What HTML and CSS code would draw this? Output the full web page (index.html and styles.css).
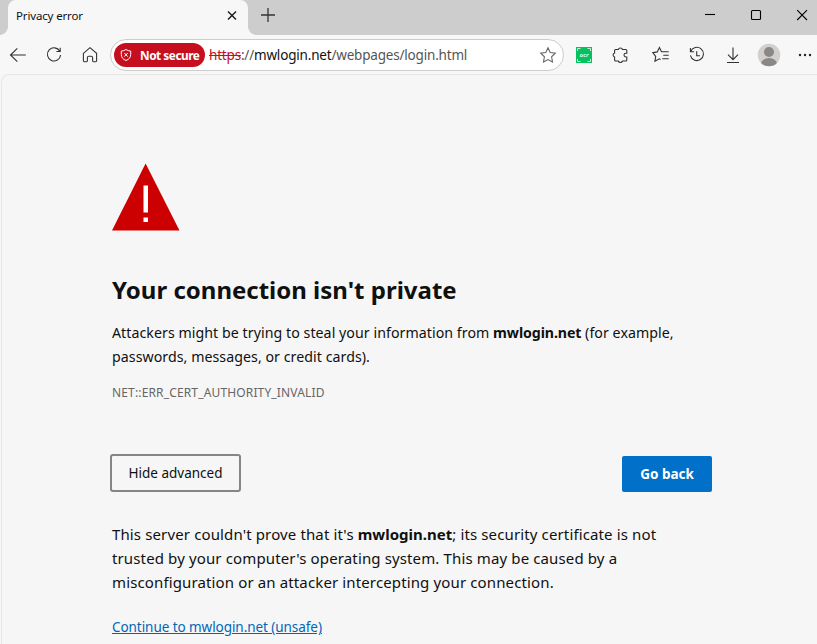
FILE: index.html
```html
<!DOCTYPE html>
<html lang="en">
<head>
    <title>Privacy error</title>
    <meta charset="UTF-8">
    <meta name="viewport" content="width=device-width, initial-scale=1.0">
    <link rel="stylesheet" href="styles.css">
</head>
<body>
  <div class="tab-bar">
    <div class="tab">
      <span class="tab-title">Privacy error</span>
      <svg class="tab-close" width="10" height="10" viewBox="0 0 10 10"><path d="M1 .5L9 8.500M9 .5L1 8.500"/></svg>
    </div>
    <svg class="new-tab" width="16" height="16" viewBox="0 0 16 16"><path d="M8 1v14M1 8h14"/></svg>
    <div class="window-buttons">
      <svg width="46" height="30" viewBox="0 0 46 30"><path d="M18 14.5h10"/></svg>
      <svg width="46" height="30" viewBox="0 0 46 30"><rect x="18.5" y="10.5" width="9" height="9" rx="1"/></svg>
      <svg width="46" height="30" viewBox="0 0 46 30"><path d="M18.2 10.2l9.8 9.8M28 10.2l-9.8 9.8"/></svg>
    </div>
  </div>

  <div class="toolbar">
    <div class="tool">
      <svg width="20" height="20" viewBox="0 0 20 20"><path d="M17.8 10H2.6M9.3 3.3L2.5 10l6.8 6.7"/></svg>
    </div>
    <div class="tool">
      <svg width="20" height="20" viewBox="0 0 20 20"><path d="M15.8 6.2A6.6 6.6 0 1 0 16.6 10M16.2 2.8v3.7h-3.8"/></svg>
    </div>
    <div class="tool">
      <svg width="20" height="20" viewBox="0 0 20 20"><path d="M3.4 8.3L10 2.7l6.6 5.6v7.5q0 .9-.9.9h-2.2q-.9 0-.9-.9v-3.2q0-1.4-1.4-1.4H8.8q-1.4 0-1.4 1.4v3.2q0 .9-.9.9H4.3q-.9 0-.9-.9z"/></svg>
    </div>
    <div class="address">
      <div class="not-secure">
        <svg width="12" height="14" viewBox="0 0 12 14"><path d="M6 1.500Q8.200 3 10.700 3.100V6.500Q10.700 10.700 6 12.500Q1.300 10.700 1.300 6.500V3.100Q3.800 3 6 1.500zM4.300 5l3.400 3.600M7.700 5l-3.400 3.600"/></svg>
        <span>Not secure</span>
      </div>
      <div class="url"><span class="scheme">https</span>://<span class="host">mwlogin.net</span>/webpages/login.html</div>
      <svg class="star" width="18" height="18" viewBox="0 0 18 18"><path d="M9 1.8l2.2 4.7 5.1.7-3.7 3.6.9 5.1L9 13.5l-4.5 2.4.9-5.1L1.700 7.200l5.100-.7z"/></svg>
    </div>
    <div class="tool">
      <svg class="ocr" width="16" height="16" viewBox="0 0 16 16">
        <rect width="16" height="16"/>
        <path d="M1.500 4V1.500H4.500M11.500 1.500H14.500V4M1.500 12V14.500H4.500M11.500 14.500H14.500V12"/>
        <text x="8" y="10">ocr</text>
      </svg>
    </div>
    <div class="tool">
      <svg width="20" height="20" viewBox="0 0 20 20"><path d="M5.600 4.500h2.700a2.200 2.200 0 0 1 4.200 0h3.300q1 0 1 1v2.700h-.9a1.900 1.900 0 0 0 0 3.800h.9v3q0 1-1 1h-3.300a2.200 2.200 0 0 1-4.200 0H5.600q-1 0-1-1v-2.900a2.100 2.100 0 0 1 0-4V5.500q0-1 1-1z"/></svg>
    </div>
    <div class="divider"></div>
    <div class="tool">
      <svg width="20" height="20" viewBox="0 0 20 20"><path d="M9.600 14.500l-1.300-.7-4.400 2.500.8-5L1.800 7.700l4.500-.8L8.400 2.600l2.100 4.200h7.200M12.300 10.200h5.400M11.300 13.700h6.400"/></svg>
    </div>
    <div class="tool">
      <svg width="20" height="20" viewBox="0 0 20 20"><path d="M3.400 3.100v3.600h3.700M3.700 6.500A6.600 6.600 0 1 1 3.400 10.400M9.700 6.200v4.500h3.300"/></svg>
    </div>
    <div class="tool">
      <svg width="20" height="20" viewBox="0 0 20 20"><path d="M10 2.500v12M5 9.600l5 5 5-5M4 17.500h12"/></svg>
    </div>
    <div class="tool">
      <svg class="avatar" width="24" height="24" viewBox="0 0 24 24">
        <clipPath id="face"><circle cx="12" cy="12" r="11.300"/></clipPath>
        <circle class="disc" cx="12" cy="12" r="11.300"/>
        <circle cx="12" cy="9" r="5"/>
        <ellipse cx="12" cy="21" rx="8" ry="6" clip-path="url(#face)"/>
      </svg>
    </div>
    <div class="tool">
      <svg class="dots" width="20" height="20" viewBox="0 0 20 20"><circle cx="5" cy="10" r="1.200"/><circle cx="10" cy="10" r="1.200"/><circle cx="15" cy="10" r="1.200"/></svg>
    </div>
  </div>

  <div class="page">
    <div class="content">
      <svg class="warning" width="68" height="68" viewBox="0 0 68 68">
        <path class="triangle" d="M33.600 .5L67.500 67.500H0z"/>
        <path class="mark" d="M31.500 22.500h4.500v27h-4.500zM31.500 54.500h4.500v4.500h-4.500z"/>
      </svg>
      <h1>Your connection isn't private</h1>
      <p class="message">Attackers might be trying to steal your information from <b>mwlogin.net</b> (for example,<br>passwords, messages, or credit cards).</p>
      <div class="error-code">NET::ERR_CERT_AUTHORITY_INVALID</div>
      <div class="buttons">
        <button class="advanced">Hide advanced</button>
        <button class="primary">Go back</button>
      </div>
      <p class="details">This server couldn't prove that it's <b>mwlogin.net</b>; its security certificate is not<br>trusted by your computer's operating system. This may be caused by a<br>misconfiguration or an attacker intercepting your connection.</p>
      <a class="proceed" href="#">Continue to mwlogin.net (unsafe)</a>
    </div>
  </div>
</body>
</html>
```
FILE: styles.css
```css
* {
    box-sizing: border-box;
}

body {
    margin: 0;
    height: 644px;
    overflow: hidden;
    display: flex;
    flex-direction: column;
    background-color: #f7f7f7;
    color: #101010;
    font-family: "Noto Sans", "Open Sans", sans-serif;
    white-space: nowrap;
}

svg {
    display: block;
    flex: none;
    fill: none;
    stroke: #333;
    stroke-width: 1.1;
}

/* Tabs */
.tab-bar {
    height: 35px;
    flex: none;
    display: flex;
    background-color: #cdcdcd;
}

.tab {
    position: relative;
    width: 240px;
    margin-left: 8px;
    padding: 0 11px 4px 8px;
    display: flex;
    align-items: center;
    justify-content: space-between;
    background-color: #f7f7f7;
    border-radius: 8px 8px 0 0;
    font-size: 11.5px;
    letter-spacing: -0.15px;
}

/* Flared bottom corners of the tab */
.tab::before,
.tab::after {
    content: "";
    position: absolute;
    bottom: 0;
    width: 8px;
    height: 8px;
}

.tab::before {
    left: -8px;
    background: radial-gradient(circle at 0 0, #cdcdcd 7.5px, #f7f7f7 8px);
}

.tab::after {
    right: -8px;
    background: radial-gradient(circle at 100% 0, #cdcdcd 7.5px, #f7f7f7 8px);
}

.tab-close {
    stroke: #111;
    stroke-width: 1.3;
}

.new-tab {
    margin: 7px 0 0 12px;
    stroke-width: 1.3;
}

.window-buttons {
    display: flex;
    margin-left: auto;
    margin-right: -8px;
}

.window-buttons svg {
    stroke: #000;
}

/* Toolbar */
.toolbar {
    height: 39px;
    flex: none;
    display: flex;
    align-items: center;
    padding-top: 1px;
}

.tool {
    width: 36px;
    flex: none;
    display: flex;
    justify-content: center;
}

.address {
    width: 454px;
    height: 32px;
    flex: none;
    margin: 0 2px;
    padding: 0 6px 0 3px;
    display: flex;
    align-items: center;
    background-color: #fff;
    border: 1px solid #ccc;
    border-radius: 16px;
}

.not-secure {
    width: 91px;
    height: 24px;
    padding-left: 6px;
    display: flex;
    align-items: center;
    gap: 8px;
    background-color: #c50f1f;
    border-radius: 12px;
    color: #fff;
    font-size: 11.8px;
    font-weight: 700;
    letter-spacing: -0.45px;
}

.not-secure svg {
    stroke: #fff;
    stroke-width: 1;
}

.url {
    margin-left: 4px;
    color: #555;
    font-size: 13.5px;
    letter-spacing: -0.19px;
}

.scheme {
    color: #c50f1f;
    text-decoration: line-through;
}

.host {
    color: #111;
}

.star {
    margin-left: auto;
    stroke: #666;
}

.ocr {
    stroke: #c4f3d4;
    stroke-width: 1;
}

.ocr rect {
    fill: #07c160;
    stroke: none;
}

.ocr text {
    fill: #d8f8e4;
    stroke: none;
    font-size: 6px;
    font-weight: 700;
    font-style: italic;
    text-anchor: middle;
}

.divider {
    width: 1px;
    height: 16px;
    margin: 0 3px 0 2px;
    background-color: #c8c8c8;
}

.avatar {
    fill: #8a8886;
    stroke: none;
}

.avatar .disc {
    fill: #d2d0ce;
}

.dots {
    fill: #222;
    stroke: none;
}

/* Error page */
.page {
    flex: 1;
    margin-left: 1px;
    padding: 88px 0 0 110px;
    background-color: #f6f6f6;
    border-top: 1px solid #e6e6e6;
    border-left: 1px solid #e6e6e6;
    border-top-left-radius: 8px;
}

.content {
    width: 600px;
}

.warning {
    stroke: none;
}

.triangle {
    fill: #c00;
}

.mark {
    fill: #fff;
}

h1 {
    margin: 41px 0 0;
    font-size: 24px;
    line-height: 36px;
}

.message {
    margin: 13px 0 0;
    font-size: 14.2px;
    line-height: 24px;
    letter-spacing: 0.05px;
}

.message b {
    letter-spacing: -0.1px;
}

.error-code {
    margin-top: 14px;
    color: #666;
    font-size: 12px;
    line-height: 20px;
    letter-spacing: 0.15px;
}

.buttons {
    margin: 51px 0 0 -2px;
    display: flex;
    justify-content: space-between;
    align-items: flex-end;
}

.buttons button {
    padding: 0;
    font-family: inherit;
    font-size: 13.5px;
}

.advanced {
    width: 131px;
    height: 38px;
    background-color: #f6f6f6;
    border: 2px solid #858585;
    border-radius: 3px;
    color: #101010;
}

.buttons .primary {
    width: 90px;
    height: 36px;
    background-color: #0070c9;
    border: none;
    border-radius: 2px;
    color: #fff;
    font-weight: 700;
}

.details {
    margin: 30px 0 0;
    font-size: 15px;
    line-height: 24px;
    letter-spacing: 0.13px;
}

.details b {
    letter-spacing: 0;
}

.proceed {
    display: block;
    margin-top: 21px;
    color: #0067b8;
    font-size: 13.5px;
    line-height: 24px;
    letter-spacing: -0.06px;
}
```
